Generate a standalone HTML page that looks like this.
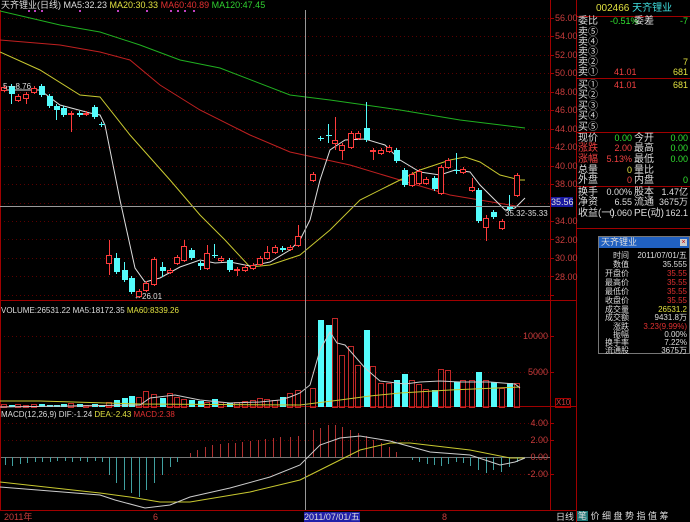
<!DOCTYPE html>
<html><head><meta charset="utf-8"><style>
*{margin:0;padding:0}
body{width:690px;height:522px;background:#000;overflow:hidden;font-family:"Liberation Sans","WenQuanYi Zen Hei","Noto Sans CJK SC",sans-serif;position:relative}
.t{position:absolute;font-size:9px;white-space:nowrap;line-height:10px}
.ax{position:absolute;font-size:9px;color:#c83c3c;left:555px;line-height:10px}
.ar{position:absolute;font-size:9px;color:#c83c3c;right:142px;line-height:10px;text-align:right}
.ip{position:absolute;left:576px;width:114px;font-size:10px;line-height:11px;color:#ddd}
.ip div{position:absolute;white-space:nowrap}
.pp{position:absolute;left:598px;top:236px;width:90px;height:116px;border:1px solid #777;background:#000}
.pp .r{position:absolute;font-size:8px;line-height:9px;white-space:nowrap}
</style></head><body>
<svg id="s" width="690" height="522" style="position:absolute;left:0;top:0"></svg>

<div class="t" style="left:1px;top:0px;color:#ddd">天齐锂业(日线) MA5:32.23 <span style="color:#e0e040">MA20:30.33</span> <span style="color:#e03030">MA60:40.89</span> <span style="color:#30d030">MA120:47.45</span></div>
<div class="t" style="left:3px;top:82px;color:#ddd;font-size:8px">5—8.76</div>
<div class="t" style="left:134px;top:292px;color:#ddd;font-size:8px">←26.01</div>
<div class="t" style="left:505px;top:209px;color:#ddd;font-size:8px">35.32-35.33</div>
<div class="t" style="left:1px;top:306px;color:#ddd;font-size:8px">VOLUME:26531.22 MA5:18172.35 <span style="color:#e0e040">MA60:8339.26</span></div>
<div class="t" style="left:1px;top:410px;color:#ddd;font-size:8px">MACD(12,26,9) DIF:-1.24 <span style="color:#e0e040">DEA:-2.43</span> <span style="color:#e03030">MACD:2.38</span></div>

<div class="ax" style="top:13px">56.00</div><div class="ax" style="top:31px">54.00</div><div class="ax" style="top:50px">52.00</div><div class="ax" style="top:68px">50.00</div><div class="ax" style="top:87px">48.00</div><div class="ax" style="top:105px">46.00</div><div class="ax" style="top:124px">44.00</div><div class="ax" style="top:142px">42.00</div><div class="ax" style="top:161px">40.00</div><div class="ax" style="top:179px">38.00</div><div class="ax" style="top:216px">34.00</div><div class="ax" style="top:235px">32.00</div><div class="ax" style="top:253px">30.00</div><div class="ax" style="top:272px">28.00</div>
<div class="ax" style="top:197px;left:551px;background:#1818a0;color:#ddd;width:22px">35.56</div>
<div class="ar" style="top:331px">10000</div><div class="ar" style="top:367px">5000</div><div class="ax" style="top:398px;border:1px solid #a00;font-size:8px;line-height:8px">X10</div>
<div class="ar" style="top:418px">4.00</div><div class="ar" style="top:435px">2.00</div><div class="ar" style="top:452px">0.00</div><div class="ar" style="top:469px">-2.00</div>

<div class="t" style="left:4px;top:512px;color:#c83c3c">2011年</div>
<div class="t" style="left:153px;top:512px;color:#c83c3c">6</div>
<div class="t" style="left:304px;top:512px;color:#ddd;background:#2020a8">2011/07/01/五</div>
<div class="t" style="left:442px;top:512px;color:#c83c3c">8</div>
<div class="t" style="left:556px;top:512px;color:#ddd">日线</div>
<div class="t" style="left:577px;top:511px;color:#ddd;font-size:9px">
<span style="background:#207878;padding:0 1px">笔</span> 价 细 盘 势 指 值 筹</div>

<div class="ip" style="top:0;height:230px">
<div style="left:20px;top:3px"><span style="color:#e0e040">002466</span> <span style="color:#40e0e0">天齐锂业</span></div>
<div style="left:2px;top:16px">委比</div><div style="left:34px;top:16px;color:#30e030;font-size:9px">-0.51%</div><div style="left:58px;top:16px">委差</div><div style="right:2px;top:16px;color:#30e030;font-size:9px">-7</div>
<div style="left:2px;top:27px">卖⑤</div><div style="left:2px;top:37px">卖④</div><div style="left:2px;top:47px">卖③</div><div style="left:2px;top:57px">卖②</div><div style="left:2px;top:67px">卖①</div>
<div style="right:2px;top:57px;color:#e0e040;font-size:9px">7</div>
<div style="left:38px;top:67px;color:#f04040;font-size:9px">41.01</div><div style="right:2px;top:67px;color:#e0e040;font-size:9px">681</div>
<div style="left:2px;top:80px">买①</div><div style="left:38px;top:80px;color:#f04040;font-size:9px">41.01</div><div style="right:2px;top:80px;color:#e0e040;font-size:9px">681</div>
<div style="left:2px;top:90px">买②</div><div style="left:2px;top:101px">买③</div><div style="left:2px;top:111px">买④</div><div style="left:2px;top:122px">买⑤</div>
<div style="left:2px;top:133px">现价</div><div style="right:58px;top:133px;color:#30e030;font-size:9px">0.00</div><div style="left:58px;top:133px">今开</div><div style="right:2px;top:133px;color:#30e030;font-size:9px">0.00</div>
<div style="left:2px;top:143px;color:#f04040">涨跌</div><div style="right:58px;top:143px;color:#f04040;font-size:9px">2.00</div><div style="left:58px;top:143px">最高</div><div style="right:2px;top:143px;color:#30e030;font-size:9px">0.00</div>
<div style="left:2px;top:154px;color:#f04040">涨幅</div><div style="right:58px;top:154px;color:#f04040;font-size:9px">5.13%</div><div style="left:58px;top:154px">最低</div><div style="right:2px;top:154px;color:#30e030;font-size:9px">0.00</div>
<div style="left:2px;top:165px">总量</div><div style="right:58px;top:165px;color:#e0e040;font-size:9px">0</div><div style="left:58px;top:165px">量比</div>
<div style="left:2px;top:175px">外盘</div><div style="right:58px;top:175px;color:#f04040;font-size:9px">0</div><div style="left:58px;top:175px">内盘</div><div style="right:2px;top:175px;color:#30e030;font-size:9px">0</div>
<div style="left:2px;top:187px">换手</div><div style="right:58px;top:187px;font-size:9px">0.00%</div><div style="left:58px;top:187px">股本</div><div style="right:2px;top:187px;font-size:9px">1.47亿</div>
<div style="left:2px;top:197px">净资</div><div style="right:58px;top:197px;font-size:9px">6.55</div><div style="left:58px;top:197px">流通</div><div style="right:2px;top:197px;font-size:9px">3675万</div>
<div style="left:2px;top:208px">收益(一)</div><div style="right:58px;top:208px;font-size:9px">0.060</div><div style="left:58px;top:208px">PE(动)</div><div style="right:2px;top:208px;font-size:9px">162.1</div>
</div>

<div class="pp">
<div style="position:absolute;left:0;top:0;width:90px;height:11px;background:#2060c0"></div>
<div class="r" style="left:2px;top:1px;color:#ddd;font-size:9px">天齐锂业</div>
<div style="position:absolute;right:2px;top:2px;width:7px;height:7px;background:#ccc;color:#c00;font-size:7px;line-height:7px;text-align:center">×</div>
<div class="r" style="right:60px;top:14px;color:#ddd">时间</div><div class="r" style="right:2px;top:14px;color:#ddd">2011/07/01/五</div>
<div class="r" style="right:60px;top:23px;color:#ddd">数值</div><div class="r" style="right:2px;top:23px;color:#ddd">35.555</div>
<div class="r" style="right:60px;top:32px;color:#ddd">开盘价</div><div class="r" style="right:2px;top:32px;color:#e03030">35.55</div>
<div class="r" style="right:60px;top:41px;color:#ddd">最高价</div><div class="r" style="right:2px;top:41px;color:#e03030">35.55</div>
<div class="r" style="right:60px;top:50px;color:#ddd">最低价</div><div class="r" style="right:2px;top:50px;color:#e03030">35.55</div>
<div class="r" style="right:60px;top:59px;color:#ddd">收盘价</div><div class="r" style="right:2px;top:59px;color:#e03030">35.55</div>
<div class="r" style="right:60px;top:68px;color:#ddd">成交量</div><div class="r" style="right:2px;top:68px;color:#e0e040">26531.2</div>
<div class="r" style="right:60px;top:76px;color:#ddd">成交额</div><div class="r" style="right:2px;top:76px;color:#ddd">9431.8万</div>
<div class="r" style="right:60px;top:85px;color:#ddd">涨跌</div><div class="r" style="right:2px;top:85px;color:#e03030">3.23(9.99%)</div>
<div class="r" style="right:60px;top:93px;color:#ddd">振幅</div><div class="r" style="right:2px;top:93px;color:#ddd">0.00%</div>
<div class="r" style="right:60px;top:101px;color:#ddd">换手率</div><div class="r" style="right:2px;top:101px;color:#ddd">7.22%</div>
<div class="r" style="right:60px;top:109px;color:#ddd">流通股</div><div class="r" style="right:2px;top:109px;color:#ddd">3675万</div>
</div>

<script>
var s=document.getElementById('s'),h='';
function L(x1,y1,x2,y2,c,d){h+='<line x1="'+x1+'" y1="'+y1+'" x2="'+x2+'" y2="'+y2+'" stroke="'+c+'" stroke-width="1"'+(d?' stroke-dasharray="'+d+'"':'')+'/>';}
function P(pts,c){h+='<polyline fill="none" stroke="'+c+'" stroke-width="1" points="'+pts+'"/>';}
for(var p=56;p>=26;p-=2){var y=Math.round(18+(56-p)*9.227)+.5;L(0,y,550,y,'#5a0000','1 3');L(550,y,554,y,'#a00000');}
[336.5,372.5].forEach(function(y){L(0,y,550,y,'#5a0000','1 3');L(550,y,554,y,'#a00000')});
[423.5,440.5,474.5].forEach(function(y){L(0,y,550,y,'#5a0000','1 3');L(550,y,554,y,'#a00000')});
L(0,457.5,550,457.5,'#777');
L(0.5,10,0.5,510,'#a00000');L(550.5,0,550.5,510,'#a00000');L(576.5,0,576.5,522,'#a00000');
L(0,300.5,576,300.5,'#a00000');L(0,406.5,576,406.5,'#a00000');L(0,510.5,576,510.5,'#a00000');
L(576,16.5,690,16.5,'#a00000');L(576,78.5,690,78.5,'#a00000');L(576,132.5,690,132.5,'#a00000');L(576,186.5,690,186.5,'#a00000');L(576,228.5,690,228.5,'#a00000');
[28,34,41,79,117,146,170,177,184,193].forEach(function(x){h+='<rect x="'+x+'" y="10" width="2" height="2" fill="#c040c0"/>'});
P('0,11 60,25 100,32 140,45 180,60 220,68 290,95 330,100 400,110 460,120 525,128','#20b020');
P('0,40 60,45 100,52 130,60 160,85 200,110 250,135 290,152 350,165 400,180 450,195 510,205 520,207','#c02020');
P('0,52 40,70 80,95 100,97 130,135 170,180 200,215 225,240 250,267 270,265 300,255 330,230 360,200 390,185 420,170 450,160 465,157 480,162 500,175 520,180 525,180','#c8c830');
P('5,90 40,90 60,105 90,113 100,115 105,125 120,200 135,268 145,282 160,278 180,267 200,260 215,263 230,262 250,266 270,262 290,250 300,240 310,220 320,180 330,150 345,140 365,139 385,145 400,160 420,172 440,175 455,170 470,172 480,185 495,200 505,210 515,208 525,198','#ddd');
var C=[[4,87,90,0,0,'r'],[11,86,94,0,104,'c'],[18,96,100,0,0,'r'],[26,94,98,0,104,'r'],[34,88,92,0,0,'r'],[41,86,95,0,0,'c'],[49,96,106,0,0,'c'],[56,106,110,0,120,'c'],[63,108,115,0,0,'c'],[71,113,114,0,132,'r'],[79,113,115,0,0,'c'],[86,113,114,0,0,'r'],[94,107,117,0,0,'c'],[101,124,125,0,0,'c'],
[109,255,263,240,275,'r'],[116,258,272,253,0,'c'],[124,270,280,262,0,'c'],[131,278,292,0,0,'c'],[139,291,296,0,0,'r'],[146,283,290,0,0,'r'],[154,259,284,0,0,'r'],[162,267,271,262,277,'c'],[170,270,272,0,0,'r'],[177,257,263,0,0,'r'],[184,246,260,240,0,'r'],[191,250,258,0,0,'c'],[200,263,266,0,270,'c'],[207,253,268,245,0,'r'],[214,255,256,244,0,'c'],[221,258,260,0,0,'r'],[229,260,270,0,0,'c'],[237,269,270,0,276,'r'],[245,267,270,0,0,'r'],[253,265,268,0,0,'r'],[260,258,264,0,0,'r'],[267,252,258,246,0,'r'],[275,247,252,0,0,'r'],[282,248,250,0,0,'c'],[290,247,249,0,0,'r'],[298,236,245,225,0,'r'],
[313,174,180,0,0,'r'],[320,138,139,0,0,'c'],[328,135,136,124,143,'c'],[335,140,143,117,150,'r'],[342,145,150,0,160,'r'],[351,133,147,0,0,'r'],[358,133,138,0,0,'r'],[366,128,140,102,0,'c'],[373,150,151,0,160,'r'],[381,150,153,0,0,'r'],[389,147,151,0,0,'r'],[396,150,161,0,0,'c'],[404,170,185,0,0,'c'],[412,174,185,0,0,'r'],[419,171,183,0,0,'r'],[426,179,183,0,0,'r'],[434,178,189,0,0,'c'],[441,167,193,0,0,'r'],[448,160,167,0,0,'r'],[456,170,171,153,174,'c'],[463,169,172,0,0,'r'],[472,187,190,178,0,'r'],[478,190,221,0,0,'c'],[486,218,227,215,241,'r'],[493,212,217,0,0,'c'],[502,221,228,0,0,'r'],[509,206,209,195,0,'c'],[517,175,195,0,0,'r']];
var V=[404,405,404,405,404,404,405,405,404,403,404,405,404,405,402,400,398,396,397,391,394,398,393,397,399,400,401,402,399,402,403,402,401,400,398,399,400,397,393,390,388,320,325,318,355,346,365,330,366,383,383,380,374,380,384,389,390,369,370,382,380,380,372,380,382,388,383,383];
C.forEach(function(c,i){var col=c[5]=='r'?'#ff3c3c':'#54fcfc',x=c[0],wt=c[3]||c[1]-2,wb=c[4]||c[2]+2;
L(x+.5,wt,x+.5,wb,col);
if(c[5]=='r')h+='<rect x="'+(x-2.5)+'" y="'+(c[1]+.5)+'" width="5" height="'+Math.max(1,c[2]-c[1])+'" fill="#000" stroke="'+col+'"/>';
else h+='<rect x="'+(x-2)+'" y="'+c[1]+'" width="6" height="'+Math.max(1,c[2]-c[1])+'" fill="'+col+'"/>';
var vt=V[i];
if(c[5]=='r')h+='<rect x="'+(x-2.5)+'" y="'+(vt+.5)+'" width="5" height="'+(407-vt)+'" fill="none" stroke="#c02828"/>';
else h+='<rect x="'+(x-2)+'" y="'+vt+'" width="6" height="'+(407-vt)+'" fill="#54fcfc"/>';});
P('0,401 40,401 140,404 300,405 340,400 370,396 400,393 450,390 520,387','#c8c830');
P('0,407 140,405 150,398 175,395 200,400 230,403 260,402 280,400 290,397 300,393 310,385 320,350 330,332 337,343 345,345 365,368 380,381 405,384 420,382 440,381 460,382 490,382 515,384 520,388','#ccc');
var M=[[5,465],[12,466],[20,464],[27,463],[35,462],[42,462],[50,462],[57,461],[65,461],[72,462],[80,461],[87,462],[95,461],[102,462],[109,475],[116,483],[124,490],[131,493],[139,497],[146,490],[154,483],[162,475],[170,467],[177,462],[190,453],[197,450],[205,447],[212,445],[220,444],[228,443],[235,443],[242,442],[250,441],[258,440],[265,439],[273,438],[280,437],[290,437],[298,436],[313,430],[320,428],[328,425],[335,425],[342,427],[350,430],[358,433],[366,436],[373,440],[381,443],[389,447],[396,452],[412,460],[419,462],[427,464],[434,465],[441,466],[448,464],[456,462],[463,463],[470,466],[478,470],[486,473],[493,470],[501,472],[509,467],[517,462]];
M.forEach(function(m){L(m[0]+.5,457,m[0]+.5,m[1],m[1]>457?'#40a0a0':'#b03030')});
P('0,482 100,493 130,497 160,502 190,502 250,492 300,480 330,465 360,450 390,443 410,443 470,450 510,458 525,458','#c8c830');
P('0,487 100,495 115,500 145,508 170,505 190,497 230,488 270,477 300,465 320,445 340,438 360,436 390,441 430,452 470,455 500,465 515,462 525,458','#ccc');
L(0,206.5,550,206.5,'#999');L(305.5,10,305.5,510,'#999');
s.innerHTML=h;
</script>
</body></html>
